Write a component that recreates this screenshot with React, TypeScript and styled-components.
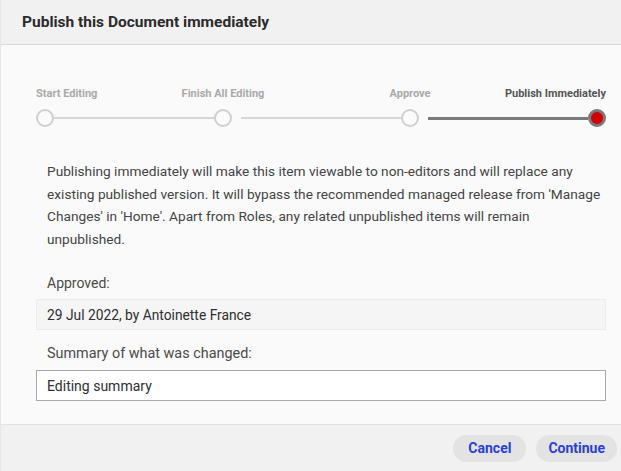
import { Fragment } from "react";
import styled, { createGlobalStyle } from "styled-components";

const GlobalStyle = createGlobalStyle`
  html, body {
    margin: 0;
    padding: 0;
    background: #fafafa;
  }
  body {
    font-family: Roboto, "Liberation Sans", sans-serif;
  }
`;

const Dialog = styled.div`
  display: flex;
  flex-direction: column;
  width: 621px;
  height: 471px;
  background: #fafafa;
  border-left: 1px solid #e6e6e6;
  box-sizing: border-box;
`;

const Header = styled.div`
  display: flex;
  align-items: center;
  height: 44px;
  padding: 0 21px;
  background: #f1f1f1;
  border-bottom: 1px solid #d9d9d9;
`;

const Title = styled.h1`
  margin: 0;
  font-size: 15.5px;
  font-weight: 700;
  color: #2b2b2b;
`;

const Body = styled.div`
  flex: 1;
  display: flex;
  flex-direction: column;
  padding: 42px 15px 0 35px;
`;

const Stepper = styled.div`
  display: flex;
  align-items: flex-end;
`;

const Step = styled.div<{ $align: "start" | "center" | "end" }>`
  display: flex;
  flex-direction: column;
  width: 18px;
  align-items: ${(p) =>
    p.$align === "start" ? "flex-start" : p.$align === "end" ? "flex-end" : "center"};
`;

const StepLabel = styled.span<{ $active?: boolean }>`
  white-space: nowrap;
  font-size: 11px;
  line-height: 13px;
  font-weight: 700;
  color: ${(p) => (p.$active ? "#555555" : "#a9a9a9")};
  margin-bottom: 9px;
`;

const Dot = styled.span<{ $active?: boolean }>`
  box-sizing: border-box;
  width: 18px;
  height: 18px;
  border-radius: 50%;
  border: ${(p) => (p.$active ? "3px solid #7a7a7a" : "2px solid #cfcfcf")};
  background: ${(p) => (p.$active ? "#d40000" : "#fbfbfb")};
`;

const Line = styled.span<{ $active?: boolean; $gap?: boolean }>`
  flex: 1;
  height: ${(p) => (p.$active ? "3px" : "2px")};
  background: ${(p) => (p.$active ? "#7a7a7a" : "#d6d6d6")};
  margin-left: ${(p) => (p.$gap ? "9px" : "0")};
  margin-bottom: ${(p) => (p.$active ? "7.5px" : "8px")};
`;

const Description = styled.p`
  margin: 33px 0 0;
  padding: 0 0 0 11px;
  font-size: 13.7px;
  line-height: 22.5px;
  color: #444444;
`;

const FieldLabel = styled.div`
  margin-top: 23px;
  padding: 0 11px;
  font-size: 14px;
  line-height: 20px;
  color: #4a4a4a;
`;

const ReadOnlyBox = styled.div`
  margin-top: 6px;
  height: 31px;
  box-sizing: border-box;
  display: flex;
  align-items: center;
  padding: 0 10px;
  background: #f5f5f5;
  border: 1px solid #ececec;
  font-size: 13.8px;
  color: #2f2f2f;
`;

const SummaryLabel = styled(FieldLabel)`
  margin-top: 14px;
  font-size: 14.4px;
`;

const SummaryInput = styled.input`
  margin-top: 6px;
  height: 31px;
  box-sizing: border-box;
  padding: 0 10px;
  background: #ffffff;
  border: 1px solid #a8a8a8;
  font-family: Roboto, "Liberation Sans", sans-serif;
  font-size: 14px;
  color: #2f2f2f;
  outline: none;
`;

const Footer = styled.div`
  display: flex;
  justify-content: flex-end;
  align-items: center;
  gap: 10px;
  height: 47px;
  padding: 0 4px 0 0;
  background: #f1f1f1;
  border-top: 1px solid #e2e2e2;
  box-sizing: border-box;
`;

const Button = styled.button`
  height: 27px;
  min-width: 73px;
  padding: 0 12px;
  border: none;
  border-radius: 14px;
  background: #e3e3e3;
  color: #2a40d8;
  font-family: Roboto, "Liberation Sans", sans-serif;
  font-size: 14px;
  font-weight: 700;
  cursor: pointer;
`;

const steps = [
  { label: "Start Editing", align: "start" as const },
  { label: "Finish All Editing", align: "center" as const },
  { label: "Approve", align: "center" as const },
  { label: "Publish Immediately", align: "end" as const, active: true },
];

export default function App() {
  return (
    <>
      <GlobalStyle />
      <Dialog>
        <Header>
          <Title>Publish this Document immediately</Title>
        </Header>
        <Body>
          <Stepper>
            {steps.map((s, i) => (
              <Fragment key={s.label}>
                {i > 0 && <Line $gap={i > 1} $active={s.active} />}
                <Step $align={s.align}>
                  <StepLabel $active={s.active}>{s.label}</StepLabel>
                  <Dot $active={s.active} />
                </Step>
              </Fragment>
            ))}
          </Stepper>
          <Description>
            Publishing immediately will make this item viewable to non-editors and will replace any
            existing published version. It will bypass the recommended managed release from 'Manage
            Changes' in 'Home'. Apart from Roles, any related unpublished items will remain
            <br />
            unpublished.
          </Description>
          <FieldLabel>Approved:</FieldLabel>
          <ReadOnlyBox>29 Jul 2022, by Antoinette France</ReadOnlyBox>
          <SummaryLabel>Summary of what was changed:</SummaryLabel>
          <SummaryInput defaultValue="Editing summary" />
        </Body>
        <Footer>
          <Button>Cancel</Button>
          <Button>Continue</Button>
        </Footer>
      </Dialog>
    </>
  );
}
